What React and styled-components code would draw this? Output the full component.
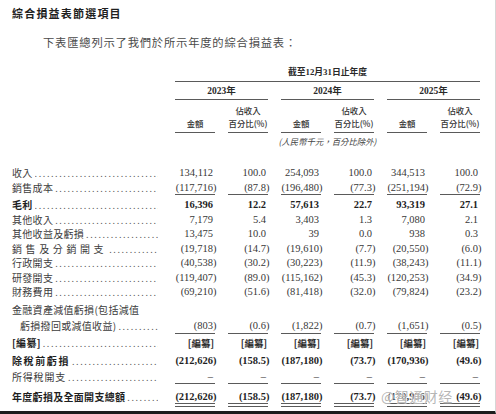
import React from "react";
import styled, { createGlobalStyle } from "styled-components";

const years = ["2023年", "2024年", "2025年"];

const rows = [
  { label: "收入", v: ["134,112", "100.0", "254,093", "100.0", "344,513", "100.0"], mt: 19 },
  { label: "銷售成本", v: ["(117,716)", "(87.8)", "(196,480)", "(77.3)", "(251,194)", "(72.9)"] },
  { rule: "single", mt: -1.5 },
  { label: "毛利", bold: true, v: ["16,396", "12.2", "57,613", "22.7", "93,319", "27.1"], mt: 3.5 },
  { label: "其他收入", v: ["7,179", "5.4", "3,403", "1.3", "7,080", "2.1"] },
  { label: "其他收益及虧損", v: ["13,475", "10.0", "39", "0.0", "938", "0.3"] },
  { label: "銷售及分銷開支", ls: 3.6, v: ["(19,718)", "(14.7)", "(19,610)", "(7.7)", "(20,550)", "(6.0)"] },
  { label: "行政開支", v: ["(40,538)", "(30.2)", "(30,223)", "(11.9)", "(38,243)", "(11.1)"] },
  { label: "研發開支", v: ["(119,407)", "(89.0)", "(115,162)", "(45.3)", "(120,253)", "(34.9)"] },
  { label: "財務費用", v: ["(69,210)", "(51.6)", "(81,418)", "(32.0)", "(79,824)", "(23.2)"] },
  {
    label: "金融資產減值虧損(包括減值",
    label2: "虧損撥回或減值收益)",
    lh: 16,
    mt: 2,
    v: ["(803)", "(0.6)", "(1,822)", "(0.7)", "(1,651)", "(0.5)"],
  },
  { rule: "single", mt: -0.5 },
  { label: "[編纂]", bold: true, redacted: true, mt: 2 },
  { label: "除稅前虧損", bold: true, ls: 1.6, v: ["(212,626)", "(158.5)", "(187,180)", "(73.7)", "(170,936)", "(49.6)"], mt: 3.5 },
  { label: "所得稅開支", ls: 0.8, v: ["–", "–", "–", "–", "–", "–"], mt: 1.5 },
  { rule: "single", mt: -1.25 },
  { label: "年度虧損及全面開支總額", bold: true, v: ["(212,626)", "(158.5)", "(187,180)", "(73.7)", "(170,936)", "(49.6)"], mt: 5.75 },
  { rule: "double", mt: -1.25 },
];

function Amount({ value }) {
  if (value.startsWith("(") && value.endsWith(")")) {
    return (
      <>
        {value.slice(0, -1)}
        <Paren>)</Paren>
      </>
    );
  }
  return value;
}

export default function App() {
  return (
    <>
      <GlobalStyle />
      <Page>
        <Title>綜合損益表節選項目</Title>
        <Intro>下表匯總列示了我們於所示年度的綜合損益表：</Intro>

        <Row $mt={15}>
          <span />
          <Period>截至12月31日止年度</Period>
        </Row>
        <Row>
          <span />
          {years.map((y) => (
            <Year key={y}>{y}</Year>
          ))}
        </Row>
        <Row>
          <span />
          {years.map((y) => (
            <React.Fragment key={y}>
              <ColHead>金額</ColHead>
              <ColHead>
                <span>佔收入</span>
                <span>百分比(%)</span>
              </ColHead>
            </React.Fragment>
          ))}
        </Row>
        <Row>
          <span />
          <Unit>(人民幣千元，百分比除外)</Unit>
        </Row>

        {rows.map((r, i) =>
          r.rule ? (
            <Row key={i} $mt={r.mt}>
              <span />
              {[0, 1, 2, 3, 4, 5].map((c) => (
                <Rule key={c} $double={r.rule === "double"} />
              ))}
            </Row>
          ) : (
            <Row key={i} $mt={r.mt}>
              <Label $bold={r.bold} $ls={r.ls}>
                {r.label2 ? (
                  <>
                    <LabelLine $lh={r.lh}>{r.label}</LabelLine>
                    <LabelLine $lh={r.lh} $indent={8}>
                      {r.label2}
                      <Leader />
                    </LabelLine>
                  </>
                ) : (
                  <LabelLine $lh={r.lh}>
                    {r.label}
                    <Leader />
                  </LabelLine>
                )}
              </Label>
              {r.redacted
                ? [0, 1, 2, 3, 4, 5].map((c) => <Redacted key={c}>[編纂]</Redacted>)
                : r.v.map((val, c) => (
                    <Num key={c} $bold={r.bold} $lh={r.lh}>
                      <Amount value={val} />
                    </Num>
                  ))}
            </Row>
          )
        )}

        <Watermark>@智通财经</Watermark>
      </Page>
    </>
  );
}

const GlobalStyle = createGlobalStyle`
  html, body {
    margin: 0;
    padding: 0;
    background: #ffffff;
  }
  body {
    font-family: "Liberation Serif", "Noto Sans CJK TC", serif;
    color: #2e2e2e;
  }
`;

const Page = styled.div`
  position: relative;
  width: 496px;
  height: 414px;
  box-sizing: border-box;
  padding: 5px 16px 0 12px;
  border-bottom: 3px solid #1d1d1d;
  border-right: 1px solid #d6d6d6;
  overflow: hidden;
  background: #ffffff;
`;

const Title = styled.h1`
  margin: 0;
  font: 700 11px/16px "Noto Sans CJK TC", sans-serif;
  letter-spacing: 1.2px;
  color: #1f1f1f;
`;

const Intro = styled.p`
  margin: 13px 0 0 31px;
  font: 400 11.3px/16px "Noto Sans CJK TC", serif;
  letter-spacing: 0.8px;
  color: #4a4a4a;
`;

const Row = styled.div`
  display: grid;
  grid-template-columns: 150px repeat(6, 40px);
  column-gap: 13px;
  align-items: end;
  margin-top: ${(p) => p.$mt || 0}px;
`;

const Period = styled.div`
  grid-column: 2 / -1;
  text-align: center;
  font: 700 8.8px/14px "Liberation Serif", "Noto Sans CJK TC", sans-serif;
  color: #2a2a2a;
  padding-bottom: 2px;
  border-bottom: 1px solid #5a5a5a;
`;

const Year = styled.div`
  grid-column: span 2;
  text-align: center;
  font: 700 9.5px/12px "Liberation Serif", "Noto Sans CJK TC", serif;
  color: #2a2a2a;
  padding: 3px 0 2px;
  border-bottom: 1px solid #5a5a5a;
`;

const ColHead = styled.div`
  display: flex;
  flex-direction: column;
  align-items: center;
  justify-content: flex-end;
  align-self: stretch;
  font: 500 8.4px/12.5px "Noto Sans CJK TC", sans-serif;
  color: #333333;
  padding: 4px 0 3px;
  border-bottom: 1px solid #5a5a5a;
  white-space: nowrap;
`;

const Unit = styled.div`
  grid-column: 2 / -1;
  text-align: center;
  font: italic 400 8.4px/12px "Noto Sans CJK TC", sans-serif;
  color: #444444;
  padding-top: 2px;
`;

const Label = styled.div`
  display: flex;
  flex-direction: column;
  padding-right: 4px;
  font-family: "Noto Sans CJK TC", sans-serif;
  font-size: 10px;
  font-weight: ${(p) => (p.$bold ? 700 : 400)};
  letter-spacing: ${(p) => (p.$ls != null ? p.$ls : 0.3)}px;
  color: ${(p) => (p.$bold ? "#1f1f1f" : "#3c3c3c")};
  white-space: nowrap;
`;

const LabelLine = styled.div`
  display: flex;
  align-items: baseline;
  height: ${(p) => p.$lh || 14.5}px;
  line-height: ${(p) => p.$lh || 14.5}px;
  padding-left: ${(p) => p.$indent || 0}px;
`;

const Leader = styled.span`
  flex: 1;
  min-width: 0;
  overflow: hidden;
  margin-left: 2px;
  font: 400 10px "Liberation Serif", serif;
  letter-spacing: 1.6px;
  color: #555555;

  &::after {
    content: "................................................................";
  }
`;

const Num = styled.div`
  text-align: right;
  padding-right: 2px;
  white-space: nowrap;
  font-family: "Liberation Serif", serif;
  font-size: 10.5px;
  line-height: ${(p) => p.$lh || 14.5}px;
  font-weight: ${(p) => (p.$bold ? 700 : 400)};
  color: ${(p) => (p.$bold ? "#1f1f1f" : "#383838")};
`;

const Paren = styled.span`
  margin-right: -3.5px;
`;

const Redacted = styled.div`
  text-align: right;
  padding-right: 1px;
  font: 700 9.5px/14.5px "Noto Sans CJK TC", sans-serif;
  color: #2a2a2a;
`;

const Rule = styled.div`
  box-sizing: border-box;
  height: ${(p) => (p.$double ? 4 : 1)}px;
  border-top: 1px solid #5a5a5a;
  border-bottom: ${(p) => (p.$double ? "1px solid #5a5a5a" : "none")};
`;

const Watermark = styled.div`
  position: absolute;
  left: 381px;
  top: 387px;
  font: 400 14px/18px "Noto Sans CJK SC", sans-serif;
  color: rgba(150, 150, 150, 0.7);
  text-shadow: 0 0 1px #ffffff, 0 0 2px #ffffff;
  letter-spacing: 0.5px;
  pointer-events: none;
`;
